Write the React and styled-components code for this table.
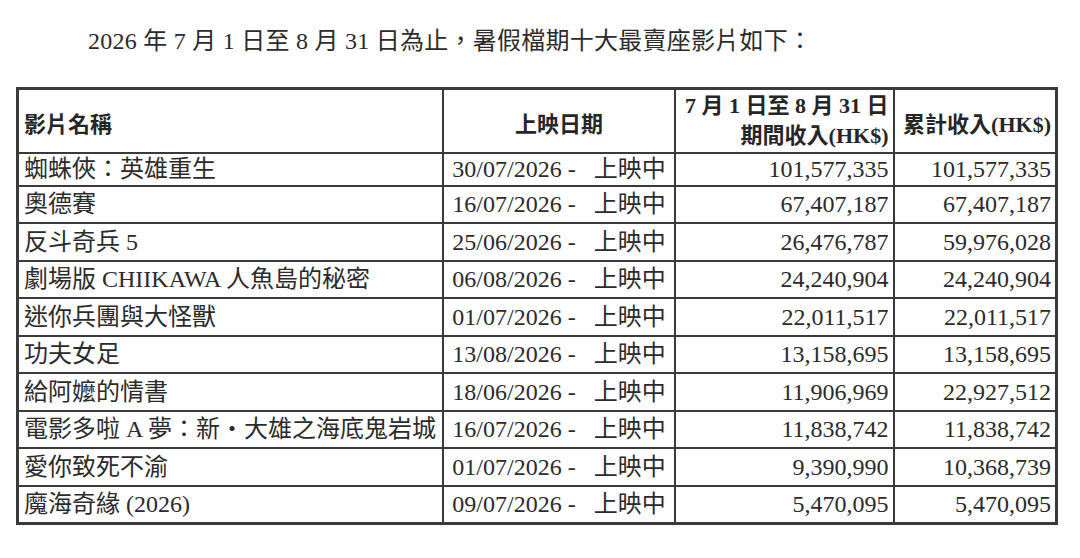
import styled, { createGlobalStyle } from "styled-components";

const GlobalStyle = createGlobalStyle`
  html, body {
    margin: 0;
    padding: 0;
    background: #ffffff;
  }
  body {
    font-family: "Liberation Serif", "Noto Sans CJK TC", serif;
    color: #2b2b2b;
  }
`;

const films = [
  { name: "蜘蛛俠：英雄重生", date: "30/07/2026", period: "101,577,335", total: "101,577,335" },
  { name: "奧德賽", date: "16/07/2026", period: "67,407,187", total: "67,407,187" },
  { name: "反斗奇兵 5", date: "25/06/2026", period: "26,476,787", total: "59,976,028" },
  { name: "劇場版 CHIIKAWA 人魚島的秘密", date: "06/08/2026", period: "24,240,904", total: "24,240,904" },
  { name: "迷你兵團與大怪獸", date: "01/07/2026", period: "22,011,517", total: "22,011,517" },
  { name: "功夫女足", date: "13/08/2026", period: "13,158,695", total: "13,158,695" },
  { name: "給阿嬤的情書", date: "18/06/2026", period: "11,906,969", total: "22,927,512" },
  { name: "電影多啦 A 夢：新・大雄之海底鬼岩城", date: "16/07/2026", period: "11,838,742", total: "11,838,742" },
  { name: "愛你致死不渝", date: "01/07/2026", period: "9,390,990", total: "10,368,739" },
  { name: "魔海奇緣 (2026)", date: "09/07/2026", period: "5,470,095", total: "5,470,095" },
];

const App = () => {
  return (
    <Page>
      <GlobalStyle />
      <Title>
        2026 年 7 月 1 日至 8 月 31 日為止，暑假檔期十大最賣座影片如下：
      </Title>

      <Table>
        <colgroup>
          <col style={{ width: 425 }} />
          <col style={{ width: 232 }} />
          <col style={{ width: 219 }} />
          <col style={{ width: 163 }} />
        </colgroup>
        <thead>
          <tr>
            <HeadCell $align="left">影片名稱</HeadCell>
            <HeadCell $align="center">上映日期</HeadCell>
            <HeadCell $align="right" $tight>
              7 月 1 日至 8 月 31 日
              <br />
              期間收入(HK$)
            </HeadCell>
            <HeadCell $align="right">累計收入(HK$)</HeadCell>
          </tr>
        </thead>
        <tbody>
          {films.map((film, i) => (
            <Row key={film.name} $first={i === 0}>
              <Cell $align="left">{film.name}</Cell>
              <Cell $align="center">
                {film.date} -<Status>上映中</Status>
              </Cell>
              <Cell $align="right">{film.period}</Cell>
              <Cell $align="right">{film.total}</Cell>
            </Row>
          ))}
        </tbody>
      </Table>
    </Page>
  );
};

export default App;

const Page = styled.div`
  display: flex;
  flex-direction: column;
  width: 1080px;
  height: 558px;
  padding-top: 26px;
  box-sizing: border-box;
  overflow: hidden;
  background: #fefefe;
`;

const Title = styled.p`
  margin: 0 0 31px 88px;
  font-size: 24px;
  line-height: 30px;
  letter-spacing: 0.25px;
  white-space: nowrap;
`;

const Table = styled.table`
  margin-left: 16px;
  width: 1039px;
  table-layout: fixed;
  border-collapse: collapse;
  border: 3px solid #3a3a3a;
`;

const HeadCell = styled.th`
  height: 64px;
  box-sizing: border-box;
  padding: ${({ $tight }) => ($tight ? "0 4px 0 6px" : "8px 4px 0 5px")};
  border: 2px solid #3a3a3a;
  text-align: ${({ $align }) => $align};
  vertical-align: middle;
  font-size: 22px;
  line-height: 30px;
  font-weight: 700;
  color: #262626;
`;

const Row = styled.tr`
  height: ${({ $first }) => ($first ? "33px" : "37.5px")};
`;

const Cell = styled.td`
  padding: 0 4px 0 5px;
  border: 2px solid #3a3a3a;
  text-align: ${({ $align }) => $align};
  vertical-align: middle;
  font-size: 24px;
  line-height: 28px;
  white-space: nowrap;
  overflow: hidden;
`;

const Status = styled.span`
  margin-left: 18px;
`;
